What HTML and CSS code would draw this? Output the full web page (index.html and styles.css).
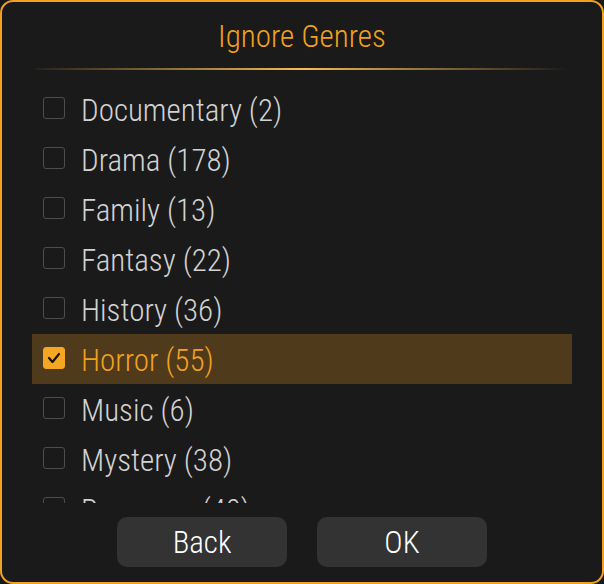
FILE: index.html
```html
<!DOCTYPE html>
<html>
<head>
<meta charset="utf-8">
<link rel="stylesheet" href="styles.css">
</head>
<body>
<div class="dialog">
  <div class="title">Ignore Genres</div>
  <div class="divider"></div>
  <div class="list">
    <div class="row"><span class="box"></span><span class="label">Documentary (2)</span></div>
    <div class="row"><span class="box"></span><span class="label">Drama (178)</span></div>
    <div class="row"><span class="box"></span><span class="label">Family (13)</span></div>
    <div class="row"><span class="box"></span><span class="label">Fantasy (22)</span></div>
    <div class="row"><span class="box"></span><span class="label">History (36)</span></div>
    <div class="row selected"><span class="box checked"><svg width="22" height="22" viewBox="0 0 22 22"><polyline points="6,11 9.5,15 16,7" fill="none" stroke="#1c1408" stroke-width="2.2" stroke-linecap="round" stroke-linejoin="round"/></svg></span><span class="label">Horror (55)</span></div>
    <div class="row"><span class="box"></span><span class="label">Music (6)</span></div>
    <div class="row"><span class="box"></span><span class="label">Mystery (38)</span></div>
    <div class="row"><span class="box"></span><span class="label">Romance (40)</span></div>
  </div>
  <div class="buttons">
    <div class="btn">Back</div>
    <div class="btn">OK</div>
  </div>
</div>
</body>
</html>
```
FILE: styles.css
```css
html, body {
  margin: 0;
  padding: 0;
  background: #181818;
}
body {
  width: 604px;
  height: 584px;
  font-family: "Roboto Condensed", "Liberation Sans", sans-serif;
  font-weight: 300;
}
.dialog {
  box-sizing: border-box;
  width: 604px;
  height: 584px;
  border: 2px solid #f2a11f;
  border-radius: 13px;
  background: #1a1a1a;
  display: flex;
  flex-direction: column;
}
.title {
  color: #f2a11f;
  font-size: 31px;
  line-height: 40px;
  text-align: center;
  padding-top: 15px;
  height: 51px;
}
.divider {
  height: 2px;
  margin: 0 33px;
  background: linear-gradient(90deg, rgba(240,165,40,0.05), #f6bd55 50%, rgba(240,165,40,0) 100%);
}
.list {
  margin: 14px 30px 0 30px;
  height: 419px;
  overflow: hidden;
}
.row {
  height: 50px;
  display: flex;
  align-items: center;
  padding-left: 11px;
  color: #d2d2d2;
  font-size: 31px;
}
.row.selected {
  background: #4f3a1b;
  color: #f2a11f;
}
.box {
  box-sizing: border-box;
  width: 22px;
  height: 22px;
  border: 1px solid #4d4d4d;
  border-radius: 3px;
  margin-right: 16px;
  margin-top: -2px;
  flex: none;
}
.box.checked {
  background: #f5a623;
  border-color: #f5a623;
  position: relative;
}
.box.checked svg {
  position: absolute;
  left: -1px;
  top: -1px;
}
.label {
  line-height: 36px;
  padding-top: 4px;
}
.buttons {
  display: flex;
  justify-content: center;
  gap: 30px;
  margin-top: 14px;
}
.btn {
  width: 170px;
  height: 50px;
  border-radius: 10px;
  background: #333333;
  color: #ffffff;
  font-size: 31px;
  line-height: 52px;
  text-align: center;
}
```
